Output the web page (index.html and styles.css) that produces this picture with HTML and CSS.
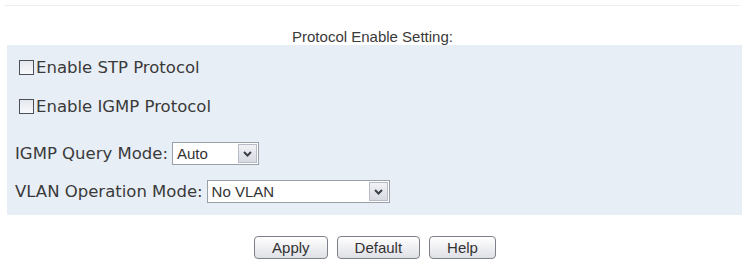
FILE: index.html
```html
<!DOCTYPE html>
<html>
<head>
<meta charset="utf-8">
<link rel="stylesheet" href="styles.css">
</head>
<body>
<div class="page">
  <div class="rule"></div>
  <div class="title">Protocol Enable Setting:</div>
  <div class="panel">
    <label class="row row-cb1"><input type="checkbox" class="cb">Enable STP Protocol</label>
    <label class="row row-cb2"><input type="checkbox" class="cb">Enable IGMP Protocol</label>
    <div class="row row-sel1">
      <span class="lbl">IGMP Query Mode:</span>
      <span class="select sel-igmp"><span class="val">Auto</span><span class="arrow"><svg width="9" height="6" viewBox="0 0 9 6"><path d="M1 1 L4.5 4.5 L8 1" fill="none" stroke="#3a3f4a" stroke-width="2"/></svg></span></span>
    </div>
    <div class="row row-sel2">
      <span class="lbl">VLAN Operation Mode:</span>
      <span class="select sel-vlan"><span class="val">No VLAN</span><span class="arrow"><svg width="9" height="6" viewBox="0 0 9 6"><path d="M1 1 L4.5 4.5 L8 1" fill="none" stroke="#3a3f4a" stroke-width="2"/></svg></span></span>
    </div>
  </div>
  <div class="buttons">
    <button class="btn">Apply</button>
    <button class="btn">Default</button>
    <button class="btn">Help</button>
  </div>
</div>
</body>
</html>
```
FILE: styles.css
```css
html, body {
  margin: 0;
  padding: 0;
  background: #ffffff;
}
.page {
  width: 745px;
  height: 262px;
  display: flex;
  flex-direction: column;
}
.rule {
  margin: 5px 5px 0 5px;
  height: 1px;
  background: #ececec;
}
.title {
  padding-top: 22px;
  height: 17px;
  line-height: 17px;
  text-align: center;
  font-family: "Liberation Sans", Arial, sans-serif;
  font-size: 15px;
  color: #3a3a3a;
}
.panel {
  margin-left: 7px;
  width: 735px;
  height: 170px;
  box-sizing: border-box;
  background: #e8eef5;
  padding-top: 8px;
  display: flex;
  flex-direction: column;
  font-family: "DejaVu Sans", Verdana, sans-serif;
  font-size: 16.5px;
  color: #3a3a3a;
}
.row {
  display: flex;
  align-items: center;
}
.row-cb1 { height: 28px; padding-left: 12px; }
.row-cb2 { height: 28px; padding-left: 12px; margin-top: 11px; }
.row-sel1 { height: 23px; padding-left: 8px; margin-top: 22px; }
.row-sel2 { height: 23px; padding-left: 8px; margin-top: 15px; }
.cb {
  appearance: none;
  -webkit-appearance: none;
  margin: 0 2px 0 0;
  width: 15px;
  height: 15px;
  box-sizing: border-box;
  border: 1px solid #4a4f58;
  background: linear-gradient(#e4e8ee, #f8f9fb);
}
.lbl {
  margin-right: 4px;
  white-space: nowrap;
}
.select {
  display: flex;
  align-items: center;
  height: 23px;
  box-sizing: border-box;
  border: 1px solid #9aa0a8;
  background: #ffffff;
  padding: 1px;
  font-family: "Liberation Sans", Arial, sans-serif;
  font-size: 15px;
  color: #333;
}
.sel-igmp { width: 87px; }
.sel-vlan { width: 183px; }
.val {
  flex: 1;
  padding-left: 3px;
}
.arrow {
  width: 19px;
  height: 19px;
  box-sizing: border-box;
  border: 1px solid #b8bcc6;
  background: linear-gradient(#f2f2f6, #d8dae2);
  display: flex;
  align-items: center;
  justify-content: center;
}
.buttons {
  margin-top: 21px;
  display: flex;
  justify-content: center;
  gap: 9px;
  padding-left: 5px;
}
.btn {
  height: 23px;
  padding: 0 17px;
  margin: 0;
  border: 1px solid #7d8088;
  border-radius: 4px;
  background: linear-gradient(#ffffff, #dfe0e6);
  font-family: "Liberation Sans", Arial, sans-serif;
  font-size: 15px;
  color: #333;
  line-height: 21px;
}
```
